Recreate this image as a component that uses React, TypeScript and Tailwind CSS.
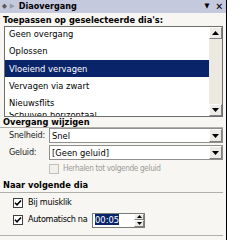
import React from "react";

const font = { fontFamily: '"DejaVu Sans Condensed", "DejaVu Sans", Tahoma, sans-serif' };

function Arrow({ dir }: { dir: "up" | "down" }) {
  return (
    <svg width="7" height="4" viewBox="0 0 7 4">
      {dir === "down" ? <path d="M0 0h7L3.5 4z" fill="#000" /> : <path d="M0 4h7L3.5 0z" fill="#000" />}
    </svg>
  );
}

function DropBtn() {
  return (
    <div className="w-[13px] self-stretch flex items-center justify-center bg-[#ecebe6] border border-t-white border-l-white border-r-[#808080] border-b-[#808080]">
      <Arrow dir="down" />
    </div>
  );
}

function Check({ checked, disabled }: { checked?: boolean; disabled?: boolean }) {
  return (
    <div
      className={`w-[10px] h-[10px] border shrink-0 flex items-center justify-center ${
        disabled ? "border-[#c0bfba] bg-[#f1f0eb]" : "border-[#404040] bg-white"
      }`}
    >
      {checked && (
        <svg width="8" height="8" viewBox="0 0 8 8">
          <path d="M1 3.8l2 2 4-4.3" stroke="#000" strokeWidth="1.6" fill="none" />
        </svg>
      )}
    </div>
  );
}

export default function App() {
  const items = ["Geen overgang", "Oplossen", "Vloeiend vervagen", "Vervagen via zwart", "Nieuwsflits"];
  return (
    <div className="w-[250px] h-[240px] bg-white flex overflow-hidden text-[9.3px] text-black" style={font}>
      <div className="w-[227px] h-full bg-[#f7f6f2] flex flex-col border-r border-black">
        <div className="h-[13px] bg-[#c4c9dd] flex items-center pl-[2px] shrink-0">
          <span className="text-[#5a5a5a] text-[7px] leading-[13px]">◆</span>
          <span className="text-[#9a9a9a] text-[7px] leading-[13px] ml-[3px]">▶</span>
          <span className="font-bold text-[9px] ml-[4px] leading-[13px]">Diaovergang</span>
          <span className="ml-auto text-[7px] leading-[13px]">▼</span>
          <span className="font-bold text-[10px] mr-[3px] ml-[6px] leading-[13px]">✕</span>
        </div>
        <div className="font-bold text-[9.2px] px-[3px] h-[13px] leading-[13px] shrink-0">Toepassen op geselecteerde dia's:</div>
        <div className="ml-[4px] mr-[3px] h-[91px] border border-[#6e6e6e] bg-white flex overflow-hidden shrink-0">
          <div className="flex-1 overflow-hidden">
            <div className="mt-[-2px]">
              {items.map((t, i) => (
                <div
                  key={t}
                  className={`h-[17.4px] flex items-center pl-[4px] ${i === 2 ? "bg-[#0a246a] text-white" : ""}`}
                >
                  {t}
                </div>
              ))}
              <div className="h-[4px] overflow-hidden pl-[4px] leading-[6px]">Schuiven horizontaal</div>
            </div>
          </div>
          <div className="w-[13px] bg-[#ece9e1] flex flex-col justify-between">
            <div className="h-[12px] bg-[#ecebe6] border border-t-white border-l-white border-r-[#808080] border-b-[#808080] flex items-center justify-center">
              <Arrow dir="up" />
            </div>
            <div className="h-[12px] bg-[#ecebe6] border border-t-white border-l-white border-r-[#808080] border-b-[#808080] flex items-center justify-center">
              <Arrow dir="down" />
            </div>
          </div>
        </div>
        <div className="font-bold text-[9.2px] px-[3px] h-[10px] leading-[10px] shrink-0">Overgang wijzigen</div>
        <div className="mr-[3px] h-[1px] bg-[#b0afaa] shrink-0"></div>
        <div className="flex items-center h-[15px] pl-[9px] pr-[3px] shrink-0">
          <span className="w-[40px] text-[#222] text-[9px] tracking-[-0.2px]">Snelheid:</span>
          <div className="flex-1 h-[15px] border border-[#8e8e8a] bg-white flex items-center">
            <span className="flex-1 pl-[2px]">Snel</span>
            <DropBtn />
          </div>
        </div>
        <div className="flex items-center mt-[2px] h-[15px] pl-[9px] pr-[3px] shrink-0">
          <span className="w-[40px] text-[#222] text-[9px] tracking-[-0.2px]">Geluid:</span>
          <div className="flex-1 h-[15px] border border-[#8e8e8a] bg-white flex items-center">
            <span className="flex-1 pl-[2px]">[Geen geluid]</span>
            <DropBtn />
          </div>
        </div>
        <div className="flex items-center gap-[4px] pl-[49px] h-[17px] shrink-0">
          <Check disabled />
          <span className="text-[#9c9b96] text-[8.2px] tracking-[-0.35px]">Herhalen tot volgende geluid</span>
        </div>
        <div className="font-bold text-[9.2px] px-[3px] h-[13px] leading-[13px] mt-[1px] shrink-0">Naar volgende dia</div>
        <div className="mr-[3px] h-[1px] bg-[#b0afaa] mt-[1px] shrink-0"></div>
        <div className="flex items-center pl-[13px] h-[17px] mt-[1px] shrink-0">
          <Check checked />
          <span className="ml-[5px] text-[9px] tracking-[-0.2px]">Bij muisklik</span>
        </div>
        <div className="flex items-center pl-[13px] h-[16px] mt-[1px] shrink-0">
          <Check checked />
          <span className="ml-[5px] w-[64px] whitespace-nowrap text-[9px] tracking-[-0.3px]">Automatisch na</span>
          <div className="w-[53px] h-[15px] border border-[#7a7a76] bg-white flex items-center">
            <div className="flex-1 pl-[2px]">
              <span className="bg-[#0a246a] text-white">00:05</span>
            </div>
            <div className="w-[10px] self-stretch flex flex-col bg-[#ecebe6]">
              <div className="flex-1 flex items-center justify-center border border-t-white border-l-white border-r-[#808080] border-b-[#808080]">
                <svg width="5" height="3" viewBox="0 0 5 3"><path d="M0 3h5L2.5 0z" /></svg>
              </div>
              <div className="flex-1 flex items-center justify-center border border-t-white border-l-white border-r-[#808080] border-b-[#808080]">
                <svg width="5" height="3" viewBox="0 0 5 3"><path d="M0 0h5L2.5 3z" /></svg>
              </div>
            </div>
          </div>
        </div>
        <div className="mr-[3px] h-[1px] bg-[#b0afaa] mt-[7px] shrink-0"></div>
      </div>
    </div>
  );
}
